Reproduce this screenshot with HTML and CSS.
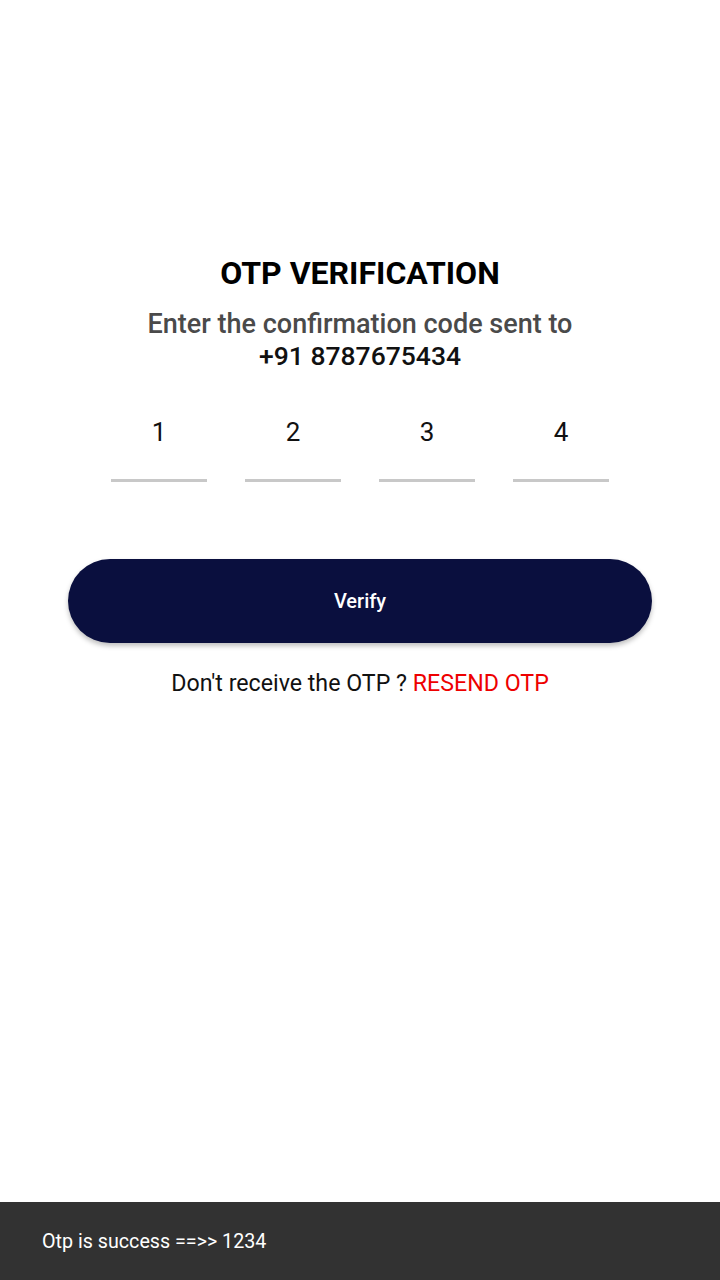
FILE: index.html
```html
<!DOCTYPE html>
<html>
<head>
<meta charset="utf-8">
<link rel="stylesheet" href="styles.css">
</head>
<body>
<div class="screen">
  <main class="content">
    <h1 class="title">OTP VERIFICATION</h1>
    <p class="subtitle">Enter the confirmation code sent to<br><span class="phone">+91 8787675434</span></p>
    <div class="otp-row">
      <div class="otp-box"><span class="digit">1</span><span class="line"></span></div>
      <div class="otp-box"><span class="digit">2</span><span class="line"></span></div>
      <div class="otp-box"><span class="digit">3</span><span class="line"></span></div>
      <div class="otp-box"><span class="digit">4</span><span class="line"></span></div>
    </div>
    <button class="verify">Verify</button>
    <p class="resend">Don't receive the OTP ? <span class="resend-link">RESEND OTP</span></p>
  </main>
  <div class="snackbar">Otp is success ==&gt;&gt; 1234</div>
</div>
</body>
</html>
```
FILE: styles.css
```css
* { box-sizing: border-box; }
html, body { margin: 0; padding: 0; }
body {
  width: 720px;
  height: 1280px;
  background: #ffffff;
  font-family: Roboto, "Noto Sans", sans-serif;
  overflow: hidden;
}
.screen {
  height: 1280px;
  display: flex;
  flex-direction: column;
}
.content {
  flex: 1;
  display: flex;
  flex-direction: column;
  align-items: center;
  padding-top: 253px;
}
.title {
  margin: 0;
  font-size: 32px;
  font-weight: 700;
  line-height: 40px;
  color: #000;
}
.subtitle {
  margin: 15px 0 0;
  text-align: center;
  font-size: 27px;
  font-weight: 500;
  line-height: 32px;
  color: #4a4a4a;
}
.phone { color: #111; font-size: 26.5px; }
.otp-row {
  margin-top: 44px;
  display: flex;
  gap: 38px;
}
.otp-box {
  width: 96px;
  display: flex;
  flex-direction: column;
  align-items: center;
}
.digit {
  font-size: 26px;
  line-height: 32px;
  color: #111;
}
.line {
  margin-top: 31px;
  width: 96px;
  height: 3px;
  background: #c8c8c8;
}
.verify {
  margin-top: 77px;
  width: 584px;
  height: 84px;
  border: none;
  border-radius: 42px;
  background: #0a0f3e;
  color: #fff;
  font-family: Roboto, "Noto Sans", sans-serif;
  font-size: 20px;
  font-weight: 500;
  box-shadow: 0 3px 5px rgba(0,0,0,0.25);
}
.resend {
  margin: 25px 0 0;
  font-size: 23.2px;
  line-height: 30px;
  color: #111;
}
.resend-link { color: #ee0000; }
.snackbar {
  height: 78px;
  background: #323232;
  color: #fff;
  font-size: 19.7px;
  display: flex;
  align-items: center;
  padding-left: 42px;
}
```
